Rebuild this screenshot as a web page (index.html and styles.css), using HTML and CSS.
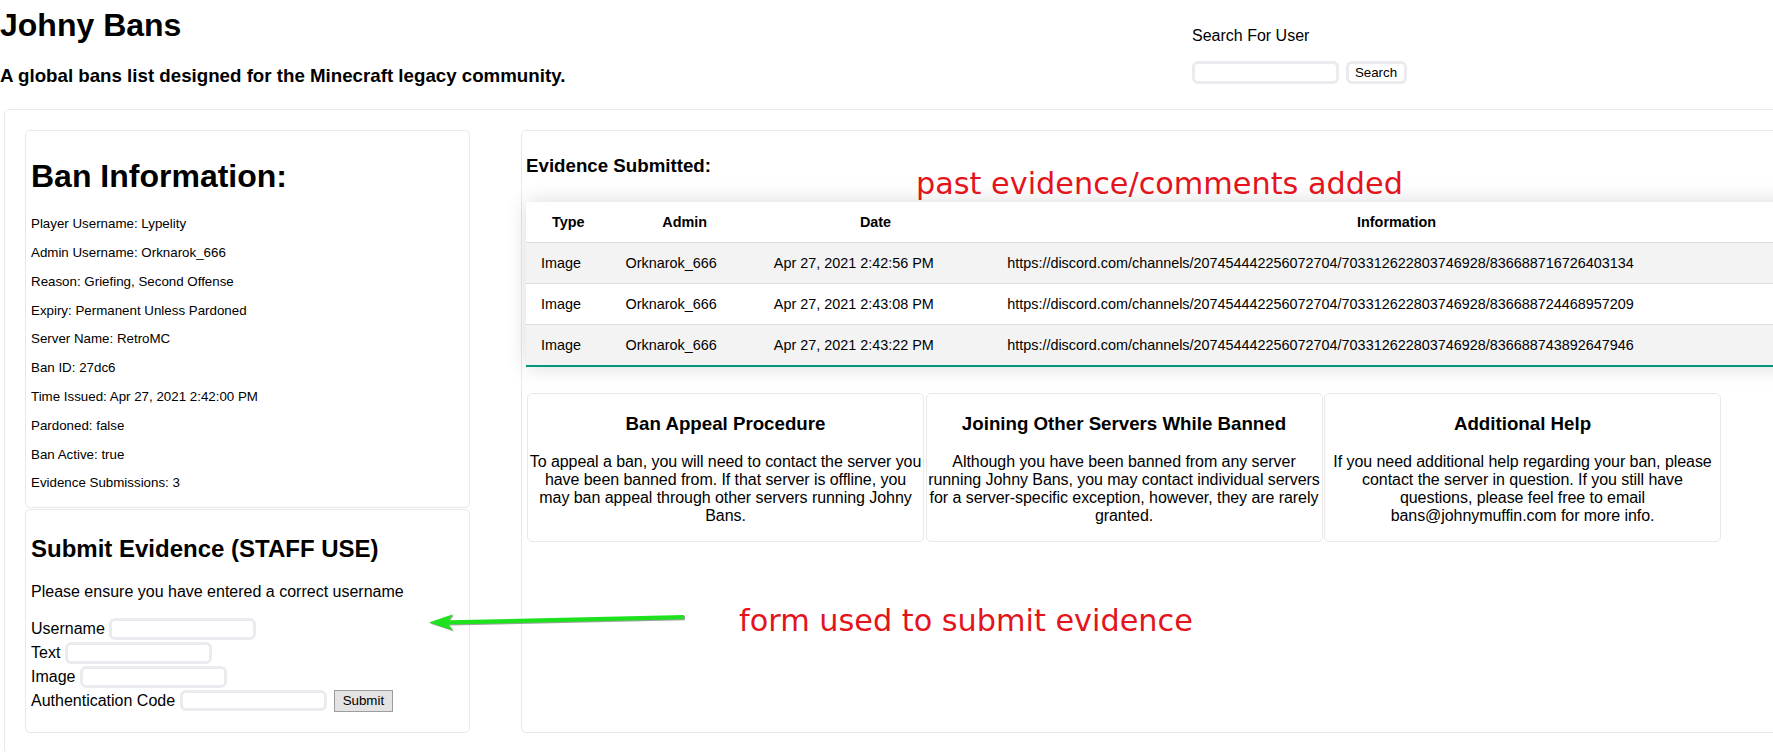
FILE: index.html
```html
<!DOCTYPE html>
<html lang="en">
<head>
<meta charset="utf-8">
<title>Johny Bans</title>
<link rel="stylesheet" href="styles.css">
</head>
<body>
<header class="site-header">
  <div class="brand">
    <h1 class="site-title">Johny Bans</h1>
    <h3 class="tagline">A global bans list designed for the Minecraft legacy community.</h3>
  </div>
  <div class="search">
    <p class="search-label">Search For User</p>
    <form class="search-form">
      <input type="text" class="text-input search-input">
      <button type="button" class="soft-btn">Search</button>
    </form>
  </div>
</header>

<main class="layout">
  <div class="sidebar">
    <section class="card ban-card">
      <h1 class="ban-title">Ban Information:</h1>
      <p class="ban-row">Player Username: Lypelity</p>
      <p class="ban-row">Admin Username: Orknarok_666</p>
      <p class="ban-row">Reason: Griefing, Second Offense</p>
      <p class="ban-row">Expiry: Permanent Unless Pardoned</p>
      <p class="ban-row">Server Name: RetroMC</p>
      <p class="ban-row">Ban ID: 27dc6</p>
      <p class="ban-row">Time Issued: Apr 27, 2021 2:42:00 PM</p>
      <p class="ban-row">Pardoned: false</p>
      <p class="ban-row">Ban Active: true</p>
      <p class="ban-row">Evidence Submissions: 3</p>
    </section>
    <section class="card submit-card">
      <h2 class="submit-title">Submit Evidence (STAFF USE)</h2>
      <p class="submit-note">Please ensure you have entered a correct username</p>
      <form class="evidence-form">
        <div class="field"><label>Username</label><input type="text" class="text-input form-input"></div>
        <div class="field"><label>Text</label><input type="text" class="text-input form-input"></div>
        <div class="field"><label>Image</label><input type="text" class="text-input form-input"></div>
        <div class="field"><label>Authentication Code</label><input type="text" class="text-input form-input"><button type="button" class="submit-btn">Submit</button></div>
      </form>
    </section>
  </div>

  <section class="card evidence-card">
    <h3 class="section-title">Evidence Submitted:</h3>
    <table class="evidence-table">
      <colgroup>
        <col class="col-type">
        <col class="col-admin">
        <col class="col-date">
        <col class="col-info">
      </colgroup>
      <thead>
        <tr><th>Type</th><th>Admin</th><th>Date</th><th>Information</th></tr>
      </thead>
      <tbody>
        <tr><td>Image</td><td>Orknarok_666</td><td>Apr 27, 2021 2:42:56 PM</td><td>https://discord.com/channels/207454442256072704/703312622803746928/836688716726403134</td></tr>
        <tr><td>Image</td><td>Orknarok_666</td><td>Apr 27, 2021 2:43:08 PM</td><td>https://discord.com/channels/207454442256072704/703312622803746928/836688724468957209</td></tr>
        <tr><td>Image</td><td>Orknarok_666</td><td>Apr 27, 2021 2:43:22 PM</td><td>https://discord.com/channels/207454442256072704/703312622803746928/836688743892647946</td></tr>
      </tbody>
    </table>
    <div class="info-row">
      <div class="info-card">
        <h3 class="info-title">Ban Appeal Procedure</h3>
        <p class="info-text">To appeal a ban, you will need to contact the server you have been banned from. If that server is offline, you may ban appeal through other servers running Johny Bans.</p>
      </div>
      <div class="info-card">
        <h3 class="info-title">Joining Other Servers While Banned</h3>
        <p class="info-text">Although you have been banned from any server running Johny Bans, you may contact individual servers for a server-specific exception, however, they are rarely granted.</p>
      </div>
      <div class="info-card">
        <h3 class="info-title">Additional Help</h3>
        <p class="info-text">If you need additional help regarding your ban, please contact the server in question. If you still have questions, please feel free to email bans@johnymuffin.com for more info.</p>
      </div>
    </div>
  </section>
</main>

<div class="annotation note-table">past evidence/comments added</div>
<div class="annotation note-form">form used to submit evidence</div>
<svg class="arrow" width="265" height="32" viewBox="0 0 265 32" aria-hidden="true">
  <polygon points="5,18.6 29,10.3 24.5,16.3 260,11 260,15.2 24.5,20.6 29,26.6" fill="#7a7a7a" opacity="0.7"/>
  <polygon points="4,17.6 28,9.3 23.5,15.3 259,10 259,14.2 23.5,19.6 28,25.6" fill="#1ee21e"/>
</svg>
</body>
</html>
```

FILE: styles.css
```css
body {
  margin: 0;
  font-family: "Liberation Sans", Arial, sans-serif;
  color: #000;
  background: #fff;
  overflow: hidden;
  position: relative;
}

.site-header {
  display: grid;
  grid-template-columns: 1192px 1fr;
}

.site-title {
  font-size: 32px;
  margin: 7px 0 21.44px;
}

.tagline {
  font-size: 18.72px;
  margin: 0 0 18.72px;
}

.search {
  padding-top: 10.7px;
}

.search-label {
  font-size: 16px;
  margin: 16px 0;
}

.search-form {
  display: flex;
  gap: 6.5px;
  margin: 0;
}

.text-input {
  box-sizing: border-box;
  border: 3px solid #ebebef;
  border-radius: 6px;
  background: #fff;
  padding: 0 4px;
  font: 13.33px "Liberation Sans", Arial, sans-serif;
  outline: none;
}

.search-input {
  width: 147px;
  height: 23px;
}

.soft-btn {
  box-sizing: border-box;
  width: 61px;
  height: 23px;
  border: 3px solid #ebebef;
  border-radius: 6px;
  background: #fff;
  font: 13.33px "Liberation Sans", Arial, sans-serif;
  color: #000;
  padding: 0;
}

.layout {
  display: flex;
  width: max-content;
  margin: 3px 0 0 4px;
  border: 1px solid #e9e9e9;
  border-radius: 5px;
  padding: 20px;
  gap: 51px;
}

.sidebar {
  display: flex;
  flex-direction: column;
  gap: 1px;
  width: 445px;
}

.card {
  box-sizing: border-box;
  border: 1px solid #e9e9e9;
  border-radius: 5px;
  background: #fff;
}

.ban-card {
  padding: 5px 5px 3px;
}

.ban-title {
  font-size: 32px;
  margin: 21.44px 0;
}

.ban-row {
  font-size: 13.33px;
  line-height: 15.5px;
  margin: 13.33px 0;
}

.submit-card {
  padding: 5px;
}

.submit-title {
  font-size: 24px;
  margin: 19.92px 0;
}

.submit-note {
  font-size: 16px;
  margin: 16px 0;
}

.evidence-form {
  margin: 0 0 14px;
  font-size: 16px;
}

.field {
  display: flex;
  align-items: center;
  gap: 4.4px;
  height: 23.9px;
}

.form-input {
  width: 147px;
  height: 21.5px;
}

.submit-btn {
  box-sizing: border-box;
  width: 59px;
  height: 22px;
  margin-left: 3px;
  border: 1px solid #9d9d9d;
  border-radius: 0;
  background: #e3e3e3;
  font: 13.33px "Liberation Sans", Arial, sans-serif;
  color: #000;
  padding: 0;
}

.evidence-card {
  width: 1285px;
  padding: 5px 4px;
}

.section-title {
  font-size: 18.72px;
  margin: 18.72px 0;
}

.evidence-table {
  table-layout: fixed;
  width: 1275px;
  border-collapse: collapse;
  margin: 25px 0 26px;
  font-size: 14.4px;
  box-shadow: 0 0 20px rgba(0, 0, 0, 0.15);
}

.col-type { width: 84.5px; }
.col-admin { width: 148.3px; }
.col-date { width: 233.4px; }
.col-info { width: auto; }

.evidence-table th {
  padding: 12px 15px;
  text-align: center;
  font-weight: bold;
  background: #fff;
}

.evidence-table thead tr {
  border-bottom: 1px solid #dddddd;
}

.evidence-table td {
  padding: 12px 15px;
  text-align: left;
  white-space: nowrap;
}

.evidence-table tbody tr {
  border-bottom: 1px solid #dddddd;
}

.evidence-table tbody tr:nth-child(odd) {
  background: #f3f3f3;
}

.evidence-table tbody tr:last-child {
  border-bottom: 2px solid #009879;
}

.info-row {
  display: flex;
  gap: 1.5px;
  padding-left: 1px;
}

.info-card {
  box-sizing: border-box;
  width: 397px;
  border: 1px solid #e9e9e9;
  border-radius: 5px;
  text-align: center;
}

.info-title {
  font-size: 18.72px;
  margin: 18.72px 0;
}

.info-text {
  font-size: 16px;
  letter-spacing: -0.06px;
  margin: 16px 0;
}

.annotation {
  position: absolute;
  font-family: "DejaVu Sans", sans-serif;
  font-size: 30.3px;
  line-height: 30px;
  color: #e3141c;
  white-space: nowrap;
}

.note-table {
  left: 916px;
  top: 168.5px;
}

.note-form {
  left: 739px;
  top: 606px;
}

.arrow {
  position: absolute;
  left: 425px;
  top: 605px;
}
```
